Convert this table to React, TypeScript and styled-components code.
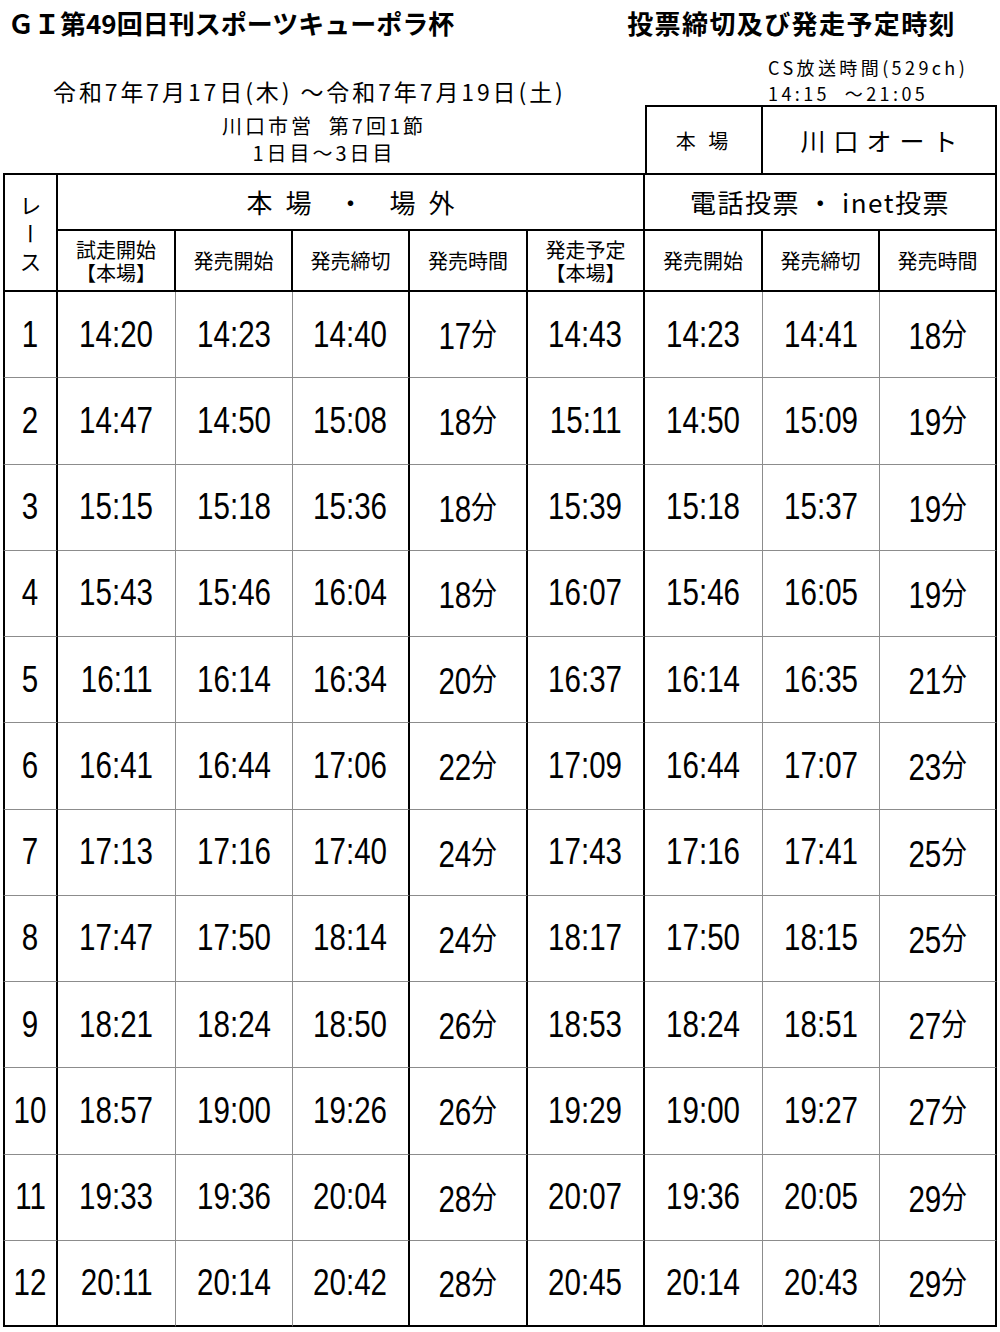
import styled, { createGlobalStyle } from 'styled-components';

const GlobalStyle = createGlobalStyle`
  html, body {
    margin: 0;
    padding: 0;
    background: #fff;
  }
  body {
    font-family: 'Noto Sans CJK JP', 'Liberation Sans', sans-serif;
    color: #000;
  }
`;

type Edge = 'bold' | 'thin' | 'none';

const line = (e?: Edge) =>
  e === 'bold' ? '2px solid #000' : e === 'thin' ? '1px solid #8c8c8c' : 'none';

const Page = styled.div`
  width: 1000px;
  height: 1332px;
  background: #fff;
  overflow: hidden;
`;

const TitleBar = styled.div`
  display: flex;
  justify-content: space-between;
  align-items: center;
  height: 46px;
  padding: 0 44px 0 8px;
`;

const Title = styled.h1<{ $spacing?: number }>`
  margin: 0;
  font-size: 26px;
  font-weight: 700;
  line-height: 30px;
  letter-spacing: ${({ $spacing }) => $spacing ?? 0}px;
  white-space: nowrap;
`;

const InfoRow = styled.div`
  display: grid;
  grid-template-columns: 645px 1fr;
  height: 59px;
`;

const DateText = styled.div`
  padding: 30px 0 0 53px;
  font-size: 23px;
  line-height: 30px;
  letter-spacing: 2.9px;
  white-space: nowrap;
`;

const Broadcast = styled.div`
  padding: 8px 0 0 123px;
`;

const BroadcastLine = styled.div`
  height: 26px;
  font-size: 18px;
  line-height: 26px;
  letter-spacing: 3.4px;
  white-space: pre;
`;

const Sheet = styled.div`
  display: grid;
  grid-template-columns: 55px 118px 117px 117px 118px 117px 118px 117px 117px;
  grid-template-rows: 70px 56px 61px repeat(12, 86.25px);
  margin-left: 3px;
  width: 994px;
`;

const Cell = styled.div<{
  $l?: Edge;
  $r?: Edge;
  $t?: Edge;
  $b?: Edge;
  $span?: number;
  $rows?: number;
}>`
  box-sizing: border-box;
  display: flex;
  flex-direction: column;
  align-items: center;
  justify-content: center;
  text-align: center;
  grid-column: span ${({ $span }) => $span ?? 1};
  grid-row: span ${({ $rows }) => $rows ?? 1};
  border-left: ${({ $l }) => line($l)};
  border-right: ${({ $r }) => line($r)};
  border-top: ${({ $t }) => line($t)};
  border-bottom: ${({ $b }) => line($b)};
`;

const Venue = styled.div`
  font-size: 20px;
  line-height: 27px;
  letter-spacing: 3px;
  white-space: pre;
`;

const BoxLabel = styled.span`
  font-size: 20px;
  letter-spacing: 4px;
`;

const TrackName = styled.span`
  font-size: 25px;
  font-weight: 400;
  letter-spacing: 8px;
  padding-left: 8px;
`;

const RaceLabel = styled.span`
  writing-mode: vertical-rl;
  font-size: 22px;
  letter-spacing: 6px;
  margin-top: 8px;
`;

const GroupLabel = styled.span<{ $spacing?: number }>`
  font-size: 26px;
  line-height: 30px;
  letter-spacing: ${({ $spacing }) => $spacing ?? 0}px;
  white-space: pre;
`;

const SubHead = styled.span`
  font-size: 20px;
  line-height: 23px;
  white-space: pre;
`;

const Value = styled.span`
  display: inline-block;
  font-family: 'Liberation Sans', 'Noto Sans CJK JP', sans-serif;
  font-size: 36px;
  line-height: 40px;
  transform: scaleX(0.82);
  white-space: nowrap;
`;

const Unit = styled.span`
  font-family: 'Noto Sans CJK JP', sans-serif;
  font-size: 31px;
  vertical-align: 4px;
`;

const subHeads = [
  '試走開始\n【本場】',
  '発売開始',
  '発売締切',
  '発売時間',
  '発走予定\n【本場】',
  '発売開始',
  '発売締切',
  '発売時間',
];

const races: string[][] = [
  ['14:20', '14:23', '14:40', '17分', '14:43', '14:23', '14:41', '18分'],
  ['14:47', '14:50', '15:08', '18分', '15:11', '14:50', '15:09', '19分'],
  ['15:15', '15:18', '15:36', '18分', '15:39', '15:18', '15:37', '19分'],
  ['15:43', '15:46', '16:04', '18分', '16:07', '15:46', '16:05', '19分'],
  ['16:11', '16:14', '16:34', '20分', '16:37', '16:14', '16:35', '21分'],
  ['16:41', '16:44', '17:06', '22分', '17:09', '16:44', '17:07', '23分'],
  ['17:13', '17:16', '17:40', '24分', '17:43', '17:16', '17:41', '25分'],
  ['17:47', '17:50', '18:14', '24分', '18:17', '17:50', '18:15', '25分'],
  ['18:21', '18:24', '18:50', '26分', '18:53', '18:24', '18:51', '27分'],
  ['18:57', '19:00', '19:26', '26分', '19:29', '19:00', '19:27', '27分'],
  ['19:33', '19:36', '20:04', '28分', '20:07', '19:36', '20:05', '29分'],
  ['20:11', '20:14', '20:42', '28分', '20:45', '20:14', '20:43', '29分'],
];

// right border of each time column: grey inside a group, black between groups
const colEdge: Edge[] = ['thin', 'thin', 'bold', 'bold', 'bold', 'thin', 'thin', 'bold'];

const renderValue = (v: string) =>
  v.endsWith('分') ? (
    <>
      {v.slice(0, -1)}
      <Unit>分</Unit>
    </>
  ) : (
    v
  );

const App = () => {
  return (
    <Page>
      <GlobalStyle />
      <TitleBar>
        <Title>ＧＩ第49回日刊スポーツキューポラ杯</Title>
        <Title $spacing={1.4}>投票締切及び発走予定時刻</Title>
      </TitleBar>
      <InfoRow>
        <DateText>令和7年7月17日(木) ～令和7年7月19日(土)</DateText>
        <Broadcast>
          <BroadcastLine>CS放送時間(529ch)</BroadcastLine>
          <BroadcastLine>{'14:15\u00a0\u00a0～21:05'}</BroadcastLine>
        </Broadcast>
      </InfoRow>
      <Sheet>
        <Cell $span={6} $b="bold">
          <Venue>{'川口市営\u00a0\u00a0第7回1節'}</Venue>
          <Venue>1日目～3日目</Venue>
        </Cell>
        <Cell $l="bold" $t="bold" $r="bold" $b="bold">
          <BoxLabel>本 場</BoxLabel>
        </Cell>
        <Cell $span={2} $t="bold" $r="bold" $b="bold">
          <TrackName>川口オート</TrackName>
        </Cell>

        <Cell $rows={2} $l="bold" $r="bold" $b="bold">
          <RaceLabel>レース</RaceLabel>
        </Cell>
        <Cell $span={5} $r="bold" $b="bold">
          <GroupLabel>{'本\u2002場\u3000・\u3000場\u2002外'}</GroupLabel>
        </Cell>
        <Cell $span={3} $r="bold" $b="bold">
          <GroupLabel $spacing={1.5}>電話投票 ・ inet投票</GroupLabel>
        </Cell>
        {subHeads.map((h, i) => (
          <Cell key={`h${i}`} $r="bold" $b="bold">
            <SubHead>{h}</SubHead>
          </Cell>
        ))}

        {races.map((row, r) => {
          const last = r === races.length - 1;
          const bottom: Edge = last ? 'bold' : 'thin';
          return [
            <Cell key={`n${r}`} $l="bold" $r="bold" $b={bottom}>
              <Value>{r + 1}</Value>
            </Cell>,
            ...row.map((v, c) => (
              <Cell key={`c${r}-${c}`} $r={colEdge[c]} $b={bottom}>
                <Value>{renderValue(v)}</Value>
              </Cell>
            )),
          ];
        })}
      </Sheet>
    </Page>
  );
};

export default App;
